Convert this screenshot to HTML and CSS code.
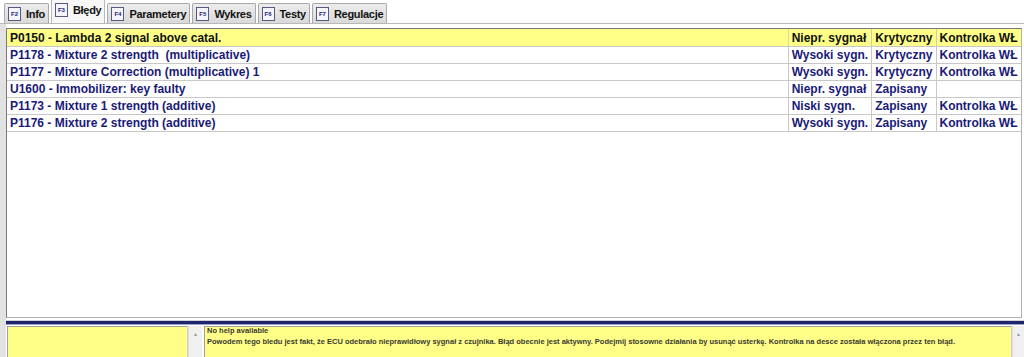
FILE: index.html
```html
<!DOCTYPE html>
<html lang="pl">
  <head>
    <meta charset="UTF-8" />
    <title>Błędy</title>
    <link rel="stylesheet" href="styles.css">
  </head>
  <body>
    <div class="tabs">
      <div class="tab"><span class="key">F2</span>Info</div>
      <div class="tab active"><span class="key">F3</span>Błędy</div>
      <div class="tab"><span class="key">F4</span>Parametery</div>
      <div class="tab"><span class="key">F5</span>Wykres</div>
      <div class="tab"><span class="key">F6</span>Testy</div>
      <div class="tab"><span class="key">F7</span>Regulacje</div>
    </div>

    <div class="main">
      <div class="panel">
        <table class="errors">
          <tr class="selected">
            <td class="code">P0150 - Lambda 2 signal above catal.</td>
            <td class="sig">Niepr. sygnał</td>
            <td class="state">Krytyczny</td>
            <td class="lamp">Kontrolka WŁ</td>
          </tr>
          <tr>
            <td class="code">P1178 - Mixture 2 strength&nbsp; (multiplicative)</td>
            <td class="sig">Wysoki sygn.</td>
            <td class="state">Krytyczny</td>
            <td class="lamp">Kontrolka WŁ</td>
          </tr>
          <tr>
            <td class="code">P1177 - Mixture Correction (multiplicative) 1</td>
            <td class="sig">Wysoki sygn.</td>
            <td class="state">Krytyczny</td>
            <td class="lamp">Kontrolka WŁ</td>
          </tr>
          <tr>
            <td class="code">U1600 - Immobilizer: key faulty</td>
            <td class="sig">Niepr. sygnał</td>
            <td class="state">Zapisany</td>
            <td class="lamp"></td>
          </tr>
          <tr>
            <td class="code">P1173 - Mixture 1 strength (additive)</td>
            <td class="sig">Niski sygn.</td>
            <td class="state">Zapisany</td>
            <td class="lamp">Kontrolka WŁ</td>
          </tr>
          <tr>
            <td class="code">P1176 - Mixture 2 strength (additive)</td>
            <td class="sig">Wysoki sygn.</td>
            <td class="state">Zapisany</td>
            <td class="lamp">Kontrolka WŁ</td>
          </tr>
        </table>
      </div>

      <div class="splitter"></div>

      <div class="help">
        <div class="memo small"></div>
        <div class="scroll left"><span class="arrow">&#9650;</span></div>
        <div class="memo text">
          <p>No help available<br>
          Powodem tego bledu jest fakt, że ECU odebrało nieprawidłowy sygnał z czujnika. Błąd obecnie jest aktywny. Podejmij stosowne działania by usunąć usterkę. Kontrolka na desce została włączona przez ten błąd.</p>
        </div>
        <div class="scroll right"><span class="arrow">&#9650;</span></div>
      </div>
    </div>
  </body>
</html>
```

FILE: styles.css
```css
body {
  margin: 0;
  font-family: "Liberation Sans", Arial, sans-serif;
  background-color: #ffffff;
  height: 357px;
  overflow: hidden;
}
.tabs {
  display: flex;
  align-items: flex-end;
  gap: 2px;
  height: 24px;
  padding-left: 4px;
  border-bottom: 1px solid #b8b8b8;
  box-sizing: border-box;
}
.tab {
  display: flex;
  align-items: center;
  gap: 5px;
  height: 20px;
  padding: 0 3px 0 3px;
  font-size: 11px;
  font-weight: bold;
  letter-spacing: -0.3px;
  color: #111;
  background: linear-gradient(#ececec, #d9d9d9);
  border: 1px solid #a8a8a8;
  border-bottom: none;
  border-radius: 2px 2px 0 0;
  box-sizing: border-box;
}
.tab.active {
  height: 24px;
  padding-bottom: 3px;
  background: #f7f7f7;
  border-color: #b8b8b8;
}
.key {
  display: flex;
  align-items: center;
  justify-content: center;
  width: 13px;
  height: 14px;
  font-size: 6px;
  letter-spacing: 0;
  font-weight: bold;
  color: #1c1c78;
  background: #f4f4fa;
  border: 1px solid #555a80;
  box-sizing: border-box;
}
.main {
  border-left: 6px solid #e2e2e2;
  padding-top: 4px;
}
.panel {
  height: 290px;
  margin-right: 2px;
  border: 1px solid #7a7a7a;
  border-right-color: #b0b0b0;
  border-bottom-color: #b0b0b0;
  box-sizing: border-box;
  background: #ffffff;
}
.errors {
  width: 100%;
  border-collapse: collapse;
  font-size: 12px;
  font-weight: bold;
  color: #1a1a78;
}
.errors td {
  height: 17px;
  padding: 0 3px;
  border-right: 1px solid #c8c8c8;
  border-bottom: 1px solid #c8c8c8;
  white-space: nowrap;
  box-sizing: border-box;
}
.errors td:last-child {
  border-right: none;
}
.errors tr.selected td {
  background-color: #ffff88;
  color: #111111;
  padding-top: 1px;
}
.errors tr.selected td.code {
  border-right-color: #d8d8a0;
}
.errors .sig {
  width: 82px;
}
.errors .state {
  width: 64px;
}
.errors .lamp {
  width: 85px;
}
.splitter {
  margin-top: 2px;
  border-top: 1px solid #d0d0d0;
  background: #1e2470;
  height: 3px;
  border-bottom: 1px solid #9aa0c0;
}
.help {
  display: flex;
  height: 33px;
  margin-top: 1px;
}
.memo {
  background: #ffff88;
  border: 1px solid #a0a0a0;
  border-right-color: #d0d0d0;
  box-sizing: border-box;
}
.memo.small {
  width: 181px;
  margin-left: 1px;
}
.memo.text {
  flex: 1;
  margin-left: 2px;
  padding: 0 2px;
  font-size: 7.5px;
  font-weight: bold;
  line-height: 11px;
  color: #3a3a30;
  white-space: nowrap;
}
.memo.text p {
  margin: -2px 0 0;
}
.scroll {
  background: #f0f0f0;
  border-left: 1px solid #e0e0e0;
  display: flex;
  justify-content: center;
}
.scroll.left {
  width: 13px;
}
.scroll.right {
  width: 11px;
}
.arrow {
  font-size: 5px;
  color: #999;
  margin-top: 5px;
}
```
